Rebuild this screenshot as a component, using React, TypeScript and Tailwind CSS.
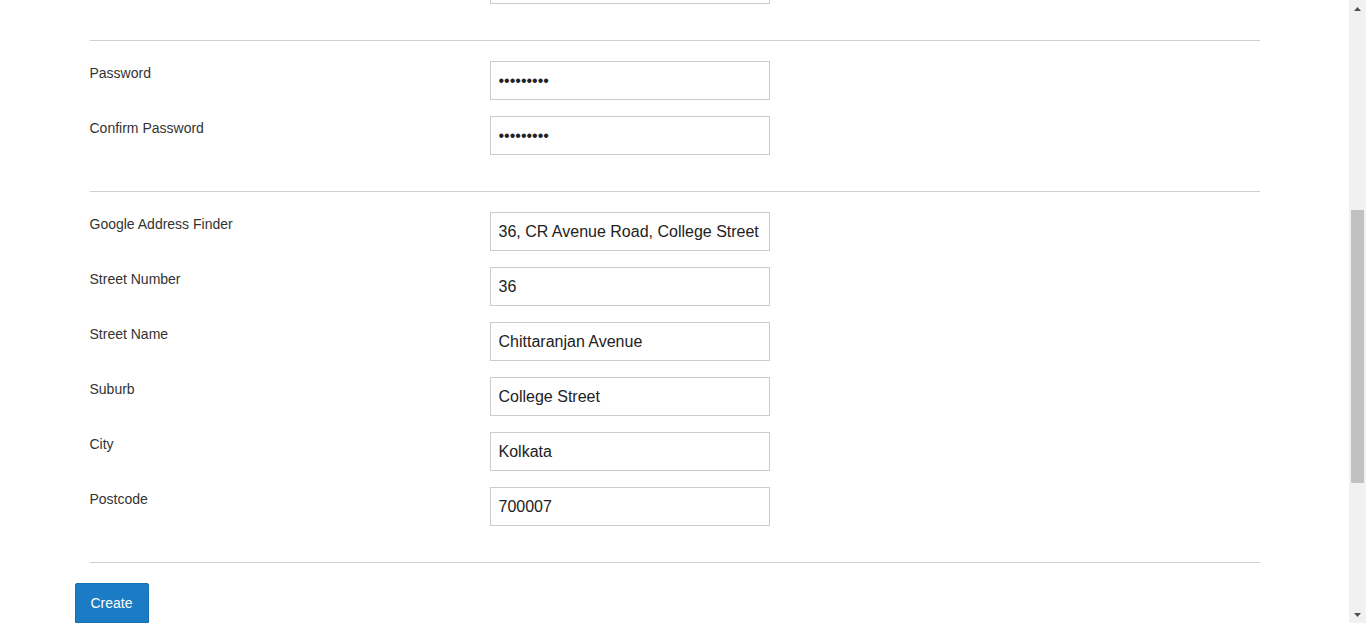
const passwordRows = [
  { label: "Password", value: "secret123" },
  { label: "Confirm Password", value: "secret123" },
];

const addressRows = [
  { label: "Google Address Finder", value: "36, CR Avenue Road, College Street" },
  { label: "Street Number", value: "36" },
  { label: "Street Name", value: "Chittaranjan Avenue" },
  { label: "Suburb", value: "College Street" },
  { label: "City", value: "Kolkata" },
  { label: "Postcode", value: "700007" },
];

const Field = ({
  label,
  value,
  type = "text",
}: {
  label?: string;
  value: string;
  type?: string;
}) => (
  <div className="grid grid-cols-[400px_280px] mb-[16px]">
    <label className="pt-[2px] text-[14px] leading-5 text-[#333]">{label}</label>
    <input
      type={type}
      defaultValue={value}
      readOnly
      className="h-[39px] w-[280px] border border-[#ccc] bg-white px-2 text-[16px] text-[#222] outline-none"
    />
  </div>
);

const Divider = () => <hr className="mt-[20px] mb-[20px] border-0 border-t border-[#cfcfcf]" />;

const Arrow = ({ up }: { up?: boolean }) => (
  <div className="h-[17px] flex items-center justify-center">
    <svg width="7" height="4" viewBox="0 0 7 4" className={up ? "" : "rotate-180"}>
      <path d="M0 4 L3.5 0 L7 4 Z" fill="#505050" />
    </svg>
  </div>
);

const App = () => {
  return (
    <div
      className="h-screen flex overflow-hidden bg-white"
      style={{ fontFamily: '"Liberation Sans", Arial, sans-serif' }}
    >
      <main className="flex-1 overflow-hidden">
        <div className="w-[1170px] mx-auto flex flex-col items-stretch">
          <div className="-mt-[35px]">
            <Field value="" />
          </div>
          <Divider />
          {passwordRows.map((r) => (
            <Field key={r.label} label={r.label} value={r.value} type="password" />
          ))}
          <Divider />
          {addressRows.map((r) => (
            <Field key={r.label} label={r.label} value={r.value} />
          ))}
          <Divider />
          <button className="self-start -ml-[15px] h-[40px] w-[74px] shrink-0 rounded-t-[2px] bg-[#1b7bc4] text-[14px] text-white border border-[#1870b3]">
            Create
          </button>
        </div>
      </main>

      <aside className="w-[17px] h-screen flex flex-col bg-[#f1f1f1]">
        <Arrow up />
        <div className="flex-1">
          <div className="mt-[193px] mx-[2px] h-[273px] bg-[#c1c1c1]" />
        </div>
        <Arrow />
      </aside>
    </div>
  );
};

export default App;
